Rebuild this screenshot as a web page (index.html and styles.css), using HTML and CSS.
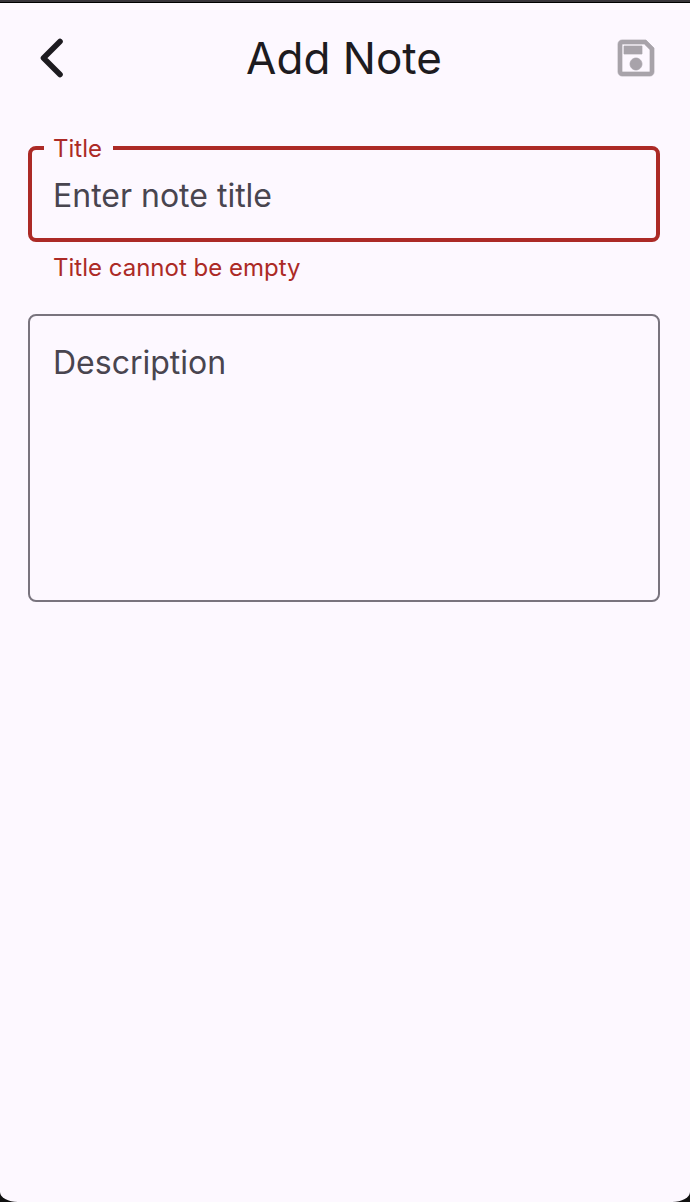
FILE: index.html
```
<!DOCTYPE html>
<html lang="en">
<head>
<meta charset="utf-8">
<meta name="viewport" content="width=device-width, initial-scale=1">
<title>Add Note</title>
<link rel="stylesheet" href="styles.css">
</head>
<body class="window">
<div class="screen">
  <header class="app-bar">
    <button class="icon-button" type="button" aria-label="Back">
      <svg class="icon" viewBox="0 0 48 48" aria-hidden="true"><path d="M32 7.500 15.500 24 32 40.500" fill="none" stroke="currentColor" stroke-width="5.600" stroke-linecap="round" stroke-linejoin="round"/></svg>
    </button>
    <h1 class="app-title">Add Note</h1>
    <button class="icon-button" type="submit" form="note-form" aria-label="Save" disabled>
      <svg class="icon" viewBox="0 0 24 24" aria-hidden="true"><path fill="currentColor" stroke="currentColor" stroke-width=".35" d="M17 3H5c-1.110 0-2 .9-2 2v14c0 1.100.89 2 2 2h14c1.100 0 2-.9 2-2V7l-4-4zm2 16H5V5h11.170L19 7.830V19zm-7-7c-1.660 0-3 1.340-3 3s1.340 3 3 3 3-1.340 3-3-1.340-3-3-3zM6 6h9v4H6V6z"/></svg>
    </button>
  </header>
  <form class="form" id="note-form">
    <fieldset class="outline">
      <legend class="legend"><label for="note-title">Title</label></legend>
      <input class="title-input" id="note-title" type="text" placeholder="Enter note title" aria-invalid="true" aria-describedby="title-error">
    </fieldset>
    <p class="error" id="title-error">Title cannot be empty</p>
    <textarea class="description" aria-label="Description" placeholder="Description"></textarea>
  </form>
</div>
</body>
</html>
```
FILE: styles.css
```
* {
  box-sizing: border-box;
}

.window {
  margin: 0;
  background: #111;
  font-family: Inter, Roboto, sans-serif;
}

.screen {
  display: flex;
  flex-direction: column;
  min-height: 100vh;
  border-top: 2px solid #38343a;
  border-radius: 0 0 18px 18px / 0 0 10px 10px;
  background: #fdf8ff;
  box-shadow: inset 0 1px #000;
}

.app-bar {
  display: flex;
  align-items: center;
  justify-content: space-between;
  height: 112px;
  padding: 0 30px 0 28px;
}

.app-title {
  margin: 0;
  color: #1d1b20;
  font-size: 44px;
  font-weight: 400;
  line-height: 56px;
}

.icon-button {
  display: flex;
  padding: 0;
  border: 0;
  background: none;
  color: #1d1b20;
}

.icon-button:disabled {
  color: #a8a3aa;
}

.icon {
  width: 48px;
  height: 48px;
}

.form {
  display: flex;
  flex-direction: column;
  padding: 20px 30px 0 28px;
}

.outline {
  min-width: 0;
  margin: 0;
  padding: 0;
  border: 4px solid #ac2a26;
  border-radius: 8px;
}

.legend {
  margin-left: 12px;
  padding: 2px 11px 0 9px;
  color: #ac2a26;
  font-size: 24px;
  line-height: 26px;
}

.title-input {
  display: block;
  width: 100%;
  height: 76px;
  padding: 0 21px 10px;
  border: 0;
  outline: 0;
  background: none;
  color: #1d1b20;
  font: inherit;
  font-size: 32px;
}

.error {
  margin: 10px 25px 30px;
  color: #ac2a26;
  font-size: 24px;
  line-height: 32px;
}

.description {
  display: block;
  width: 100%;
  height: 288px;
  padding: 23px;
  border: 2px solid #79747e;
  border-radius: 8px;
  outline: 0;
  resize: none;
  background: none;
  color: #1d1b20;
  font: inherit;
  font-size: 32px;
  line-height: 48px;
}

.title-input::placeholder,
.description::placeholder {
  color: #49454f;
  opacity: 1;
}
```
